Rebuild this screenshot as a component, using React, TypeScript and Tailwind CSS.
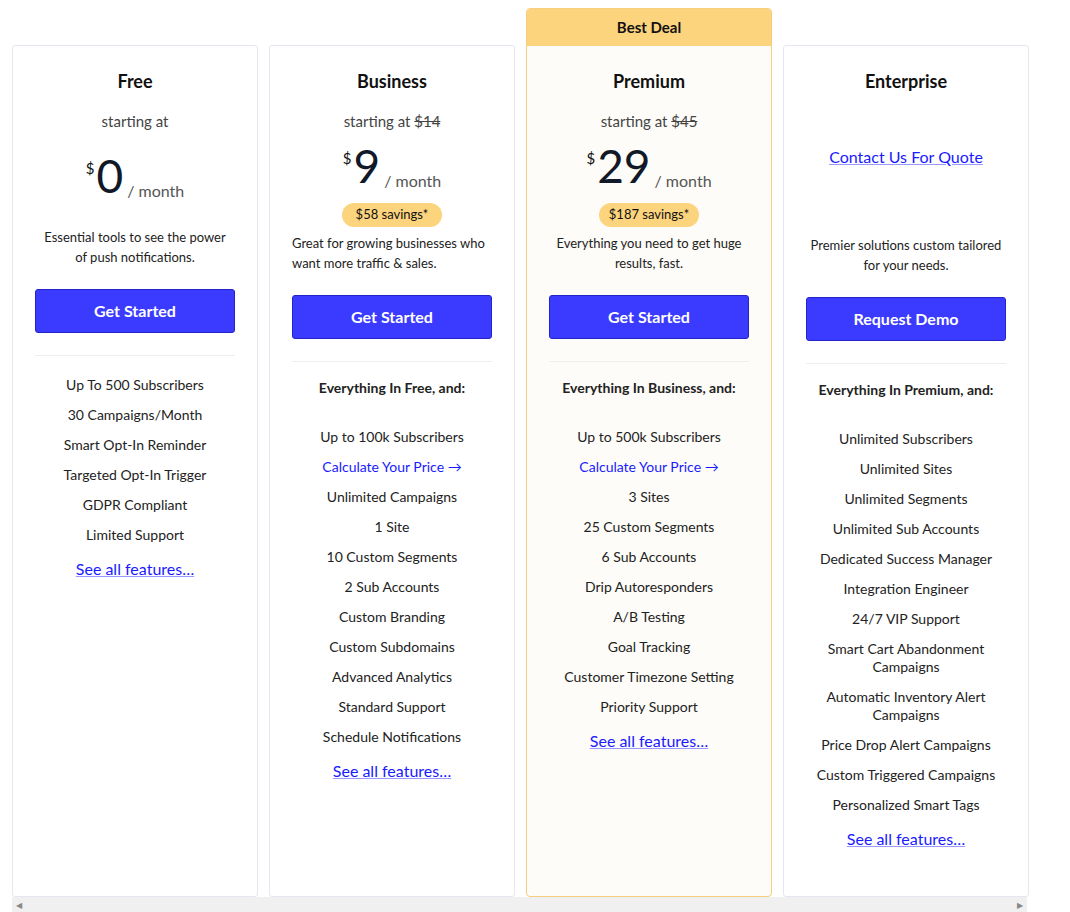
import React from "react";

const font = { fontFamily: "Lato, 'Open Sans', sans-serif" };

function Price({ v, mt }: { v: string; mt: string }) {
  return (
    <div className={`flex items-start justify-center ${mt}`}>
      <span className="text-[15px] text-[#111] mt-[4px] mr-[2px]">$</span>
      <span className="text-[46px] leading-[46px] text-[#111827]">{v}</span>
      <span className="text-[16px] text-[#555] self-end ml-[4px] mb-[-4px]">/ month</span>
    </div>
  );
}

function Feat({ items, heading, calc }: { items: string[]; heading?: string; calc?: boolean }) {
  return (
    <div className="flex flex-col items-center text-[14px] text-[#222] leading-[18px]">
      {heading && <div className="font-bold mb-[25px] mt-[1px]">{heading}</div>}
      {items.map((it, i) => (
        <React.Fragment key={i}>
          <div className="text-center py-[6px] px-6">{it}</div>
          {calc && i === 0 && (
            <div className="py-[6px] text-[#1a1aff]">Calculate Your Price →</div>
          )}
        </React.Fragment>
      ))}
      <a className="mt-[10px] text-[16px] text-[#1a1aff] underline decoration-[#9999ff]">See all features…</a>
    </div>
  );
}

function Btn({ t }: { t: string }) {
  return (
    <div className="mx-[22px] h-[44px] rounded-[3px] bg-[#3b3bff] border border-[#2323c8] flex items-center justify-center text-white font-bold text-[16px]">
      {t}
    </div>
  );
}

export default function App() {
  return (
    <div style={font} className="w-[1070px] h-[912px] bg-white relative overflow-hidden">
      <div className="flex gap-[11px] pl-[12px] pt-[8px]">
        {/* Free */}
        <div className="w-[246px] mt-[37px] h-[852px] border border-[#e5e7f0] rounded-[3px] flex flex-col">
          <div className="text-center text-[18px] font-bold mt-[22px] text-[#111]">Free</div>
          <div className="text-center text-[15px] text-[#444] mt-[15px]">starting at</div>
          <Price v="0" mt="mt-[20px]" />
          <div className="text-center text-[13px] text-[#222] leading-[20px] mt-[28px] px-6">
            Essential tools to see the power of push notifications.
          </div>
          <div className="mt-[22px]"><Btn t="Get Started" /></div>
          <div className="mx-[22px] border-t border-[#eee] mt-[22px] mb-[14px]" />
          <Feat items={["Up To 500 Subscribers", "30 Campaigns/Month", "Smart Opt-In Reminder", "Targeted Opt-In Trigger", "GDPR Compliant", "Limited Support"]} />
        </div>
        {/* Business */}
        <div className="w-[246px] mt-[37px] h-[852px] border border-[#e5e7f0] rounded-[3px] flex flex-col">
          <div className="text-center text-[18px] font-bold mt-[22px] text-[#111]">Business</div>
          <div className="text-center text-[15px] text-[#444] mt-[15px]">starting at <s>$14</s></div>
          <Price v="9" mt="mt-[10px]" />
          <div className="self-center mt-[14px] bg-[#fdd47e] rounded-full px-[14px] h-[24px] flex items-center text-[13px] text-[#111]">$58 savings*</div>
          <div className="text-[13px] text-[#222] leading-[20px] mt-[6px] px-[22px]">
            Great for growing businesses who want more traffic &amp; sales.
          </div>
          <div className="mt-[22px]"><Btn t="Get Started" /></div>
          <div className="mx-[22px] border-t border-[#eee] mt-[22px] mb-[16px]" />
          <Feat heading="Everything In Free, and:" calc items={["Up to 100k Subscribers", "Unlimited Campaigns", "1 Site", "10 Custom Segments", "2 Sub Accounts", "Custom Branding", "Custom Subdomains", "Advanced Analytics", "Standard Support", "Schedule Notifications"]} />
        </div>
        {/* Premium */}
        <div className="w-[246px] h-[889px] border border-[#f6cf7e] rounded-[4px] bg-[#fdfcf8] flex flex-col overflow-hidden">
          <div className="h-[37px] bg-[#fdd47e] flex items-center justify-center font-bold text-[15px] text-[#111]">Best Deal</div>
          <div className="text-center text-[18px] font-bold mt-[22px] text-[#111]">Premium</div>
          <div className="text-center text-[15px] text-[#444] mt-[15px]">starting at <s>$45</s></div>
          <Price v="29" mt="mt-[10px]" />
          <div className="self-center mt-[14px] bg-[#fdd47e] rounded-full px-[10px] h-[24px] flex items-center text-[13px] text-[#111]">$187 savings*</div>
          <div className="text-center text-[13px] text-[#222] leading-[20px] mt-[6px] px-[22px]">
            Everything you need to get huge results, fast.
          </div>
          <div className="mt-[22px]"><Btn t="Get Started" /></div>
          <div className="mx-[22px] border-t border-[#eee] mt-[22px] mb-[16px]" />
          <Feat heading="Everything In Business, and:" calc items={["Up to 500k Subscribers", "3 Sites", "25 Custom Segments", "6 Sub Accounts", "Drip Autoresponders", "A/B Testing", "Goal Tracking", "Customer Timezone Setting", "Priority Support"]} />
        </div>
        {/* Enterprise */}
        <div className="w-[246px] mt-[37px] h-[852px] border border-[#e5e7f0] rounded-[3px] flex flex-col">
          <div className="text-center text-[18px] font-bold mt-[22px] text-[#111]">Enterprise</div>
          <a className="text-center text-[16px] text-[#1a1aff] underline decoration-[#9999ff] mt-[50px]">Contact Us For Quote</a>
          <div className="text-center text-[13px] text-[#222] leading-[20px] mt-[66px] px-6">
            Premier solutions custom tailored for your needs.
          </div>
          <div className="mt-[22px]"><Btn t="Request Demo" /></div>
          <div className="mx-[22px] border-t border-[#eee] mt-[22px] mb-[16px]" />
          <Feat heading="Everything In Premium, and:" items={["Unlimited Subscribers", "Unlimited Sites", "Unlimited Segments", "Unlimited Sub Accounts", "Dedicated Success Manager", "Integration Engineer", "24/7 VIP Support", "Smart Cart Abandonment Campaigns", "Automatic Inventory Alert Campaigns", "Price Drop Alert Campaigns", "Custom Triggered Campaigns", "Personalized Smart Tags"]} />
        </div>
      </div>
      <div className="absolute left-[12px] top-[897px] w-[1015px] h-[15px] bg-[#f0f0f0] flex items-center justify-between px-[4px] text-[8px] text-[#888]">
        <span>◀</span><span>▶</span>
      </div>
    </div>
  );
}
